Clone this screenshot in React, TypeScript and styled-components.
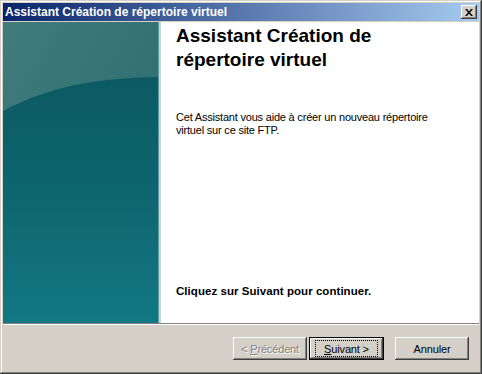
import React from "react";
import styled, { createGlobalStyle } from "styled-components";

const GlobalStyle = createGlobalStyle`
  html, body {
    margin: 0;
    padding: 0;
    background: #d4d0c8;
  }
`;

const Window = styled.div`
  box-sizing: border-box;
  width: 482px;
  height: 374px;
  padding: 3px;
  background: #d4d0c8;
  display: flex;
  flex-direction: column;
  font-family: "Liberation Sans", Arial, sans-serif;
  box-shadow: inset -1px -1px #404040, inset 1px 1px #d4d0c8,
    inset -2px -2px #808080, inset 2px 2px #ffffff;
`;

const TitleBar = styled.div`
  height: 18px;
  display: flex;
  align-items: center;
  justify-content: space-between;
  padding: 0 2px 0 2px;
  background: linear-gradient(to right, #0a246a, #a6caf0);
`;

const TitleText = styled.span`
  color: #ffffff;
  font-size: 12px;
  font-weight: 700;
  white-space: nowrap;
`;

const CloseButton = styled.div`
  box-sizing: border-box;
  width: 16px;
  height: 14px;
  background: #d4d0c8;
  display: flex;
  align-items: center;
  justify-content: center;
  box-shadow: inset -1px -1px #404040, inset 1px 1px #ffffff,
    inset -2px -2px #808080;
`;

const Body = styled.div`
  margin-top: 1px;
  height: 301px;
  display: flex;
  background: #ffffff;
`;

const Banner = styled.div`
  width: 158px;
  flex-shrink: 0;
  display: flex;
`;

const Pane = styled.div`
  flex: 1;
  display: flex;
  flex-direction: column;
  padding: 2px 10px 25px 15px;
  color: #000000;
`;

const Heading = styled.h1`
  margin: 0;
  font-size: 19px;
  line-height: 24px;
  font-weight: 700;
`;

const Intro = styled.p`
  margin: 39px 0 0 0;
  font-size: 11px;
  line-height: 13px;
  letter-spacing: -0.2px;
`;

const Hint = styled.p`
  margin: auto 0 0 0;
  font-size: 11.5px;
  line-height: 14px;
  font-weight: 700;
  letter-spacing: 0.05px;
`;

const Separator = styled.div`
  height: 1px;
  background: #808080;
  border-bottom: 1px solid #ffffff;
`;

const Footer = styled.div`
  flex: 1;
  display: flex;
  justify-content: flex-end;
  align-items: flex-start;
  padding: 12px 10px 0 0;
`;

const Button = styled.button<{ $isDefault?: boolean; $gap?: number }>`
  box-sizing: border-box;
  width: ${(p) => (p.$isDefault ? 75 : 74)}px;
  height: 23px;
  margin-left: ${(p) => p.$gap ?? 0}px;
  padding: 0;
  border: ${(p) => (p.$isDefault ? "1px solid #000" : "none")};
  background: #d4d0c8;
  font-family: "Liberation Sans", Arial, sans-serif;
  font-size: 11px;
  letter-spacing: -0.15px;
  color: #000000;
  display: flex;
  align-items: center;
  justify-content: center;
  box-shadow: inset -1px -1px #404040, inset 1px 1px #ffffff,
    inset -2px -2px #808080;

  &:disabled {
    color: #808080;
    text-shadow: 1px 1px 0 #ffffff;
  }
`;

const FocusRing = styled.span`
  box-sizing: border-box;
  display: flex;
  align-items: center;
  justify-content: center;
  width: 61px;
  height: 15px;
  outline: 1px dotted #000;
`;

const Key = styled.span`
  text-decoration: underline;
`;

const BannerArt = () => (
  <svg width="158" height="301" viewBox="0 0 158 301">
    <defs>
      <linearGradient id="top" x1="0" y1="0" x2="1" y2="1">
        <stop offset="0" stopColor="#3f7c7a" />
        <stop offset="1" stopColor="#28696e" />
      </linearGradient>
      <linearGradient id="low" x1="0" y1="0" x2="0" y2="1">
        <stop offset="0" stopColor="#0b5a62" />
        <stop offset="0.5" stopColor="#0e666f" />
        <stop offset="1" stopColor="#137883" />
      </linearGradient>
    </defs>
    <rect width="158" height="301" fill="url(#top)" />
    <path d="M0 89 C 35 70 80 56 155 55 L155 301 L0 301 Z" fill="url(#low)" />
    <rect x="155" width="1" height="301" fill="#5f9a9e" />
    <rect x="156" width="2" height="301" fill="#c2d6d7" />
  </svg>
);

export default function App() {
  return (
    <>
      <GlobalStyle />
      <Window>
        <TitleBar>
          <TitleText>Assistant Création de répertoire virtuel</TitleText>
          <CloseButton>
            <svg width="8" height="7" viewBox="0 0 8 7">
              <path d="M0 0h2l2 2.5L6 0h2L5 3.5 8 7H6L4 4.5 2 7H0l3-3.5z" fill="#000" />
            </svg>
          </CloseButton>
        </TitleBar>
        <Body>
          <Banner>
            <BannerArt />
          </Banner>
          <Pane>
            <Heading>
              Assistant Création de
              <br />
              répertoire virtuel
            </Heading>
            <Intro>
              Cet Assistant vous aide à créer un nouveau répertoire
              <br />
              virtuel sur ce site FTP.
            </Intro>
            <Hint>Cliquez sur Suivant pour continuer.</Hint>
          </Pane>
        </Body>
        <Separator />
        <Footer>
          <Button disabled>
            &lt;&nbsp;<Key>P</Key>récédent
          </Button>
          <Button $isDefault $gap={2}>
            <FocusRing>
              <Key>S</Key>uivant &gt;
            </FocusRing>
          </Button>
          <Button $gap={11}>Annuler</Button>
        </Footer>
      </Window>
    </>
  );
}
